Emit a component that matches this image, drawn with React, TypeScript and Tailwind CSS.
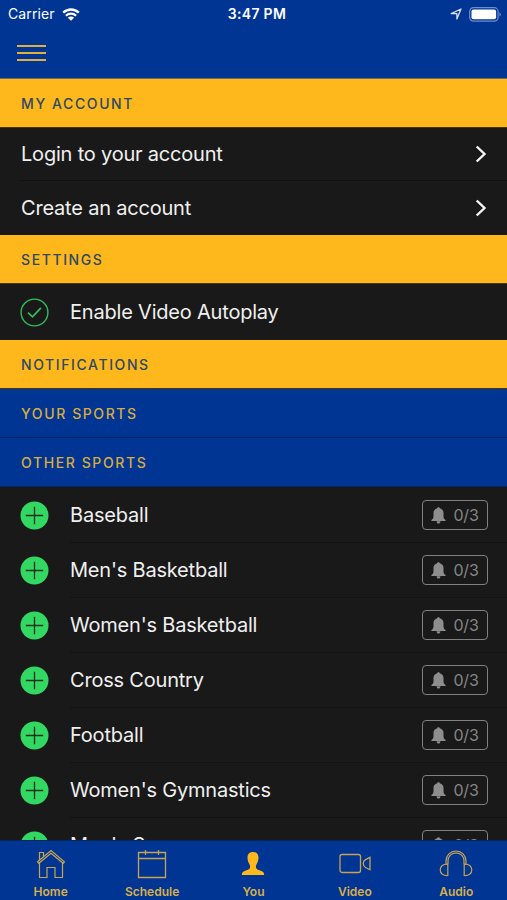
import React from 'react';

const sports = [
  'Baseball',
  "Men's Basketball",
  "Women's Basketball",
  'Cross Country',
  'Football',
  "Women's Gymnastics",
  "Men's Soccer",
];

const WifiIcon = () => (
  <svg width="18" height="13" viewBox="0 0 18 13" className="text-white">
    <path d="M1.2 4.7a11.2 11.2 0 0 1 15.6 0" fill="none" stroke="currentColor" strokeWidth="2.4" />
    <path d="M3.9 7.7a7.3 7.3 0 0 1 10.2 0" fill="none" stroke="currentColor" strokeWidth="2.2" />
    <path d="M9 12.7 5.9 9.7a4.4 4.4 0 0 1 6.2 0z" fill="currentColor" />
  </svg>
);

const LocationIcon = () => (
  <svg width="12" height="12" viewBox="0 0 12 12" fill="none" stroke="#d5def2" strokeWidth="1.3" strokeLinejoin="round">
    <path d="M11 1 6.9 11V5.6H1.2z" />
  </svg>
);

const BatteryIcon = () => (
  <svg width="33" height="15" viewBox="0 0 33 15">
    <rect x="0.7" y="0.7" width="28.4" height="13.4" rx="3.8" fill="none" stroke="#6f8cc8" strokeWidth="1.2" />
    <rect x="2.5" y="2.6" width="24.6" height="9.6" rx="1.9" fill="#fff" />
    <path d="M30.5 5.2c1.6.8 1.6 3.6 0 4.4z" fill="#7f99ce" />
  </svg>
);

const ChevronIcon = () => (
  <svg width="12" height="18" viewBox="0 0 12 18" fill="none" stroke="#f4f4f4" strokeWidth="2.4">
    <path d="m1.7 1.5 7.8 7.5-7.8 7.5" />
  </svg>
);

const CheckIcon = () => (
  <svg width="29" height="29" viewBox="0 0 29 29" fill="none" stroke="#2fbf5a" strokeWidth="1.4">
    <circle cx="14.5" cy="14.5" r="13.4" />
    <path d="m8 14.6 4.5 4.3 8.4-9" strokeWidth="1.7" />
  </svg>
);

const PlusIcon = () => (
  <svg width="29" height="29" viewBox="0 0 29 29">
    <circle cx="14.5" cy="14.5" r="14" fill="#33d863" />
    <path d="M14.5 5.8v17.4M5.8 14.5h17.4" stroke="#17301d" strokeWidth="1.3" />
  </svg>
);

const BellIcon = () => (
  <svg width="15" height="17" viewBox="0 0 15 17" fill="#8e8e8e">
    <path d="M7.5.2c-.8 0-1.3.5-1.3 1.1C3.8 1.9 2.5 3.6 2.5 5.8v3.7c0 1.7-.6 2.5-2.1 3.5v.9h14.2V13c-1.5-1-2.1-1.8-2.1-3.5V5.8c0-2.2-1.3-3.9-3.7-4.5C8.8.7 8.3.2 7.5.2z" />
    <path d="M5.6 14.2h3.8c0 1.5-.8 2.3-1.9 2.3s-1.9-.8-1.9-2.3z" />
  </svg>
);

const HomeIcon = () => (
  <svg width="30" height="30" viewBox="0 0 30 30" fill="none" stroke="#c5a552" strokeWidth="1.2">
    <path d="M1.6 12.8 15 1.5l13.4 11.3-1.2 1.5L15 4.2 2.8 14.3z" />
    <path d="M3.5 14v14.5H11v-10h8v10h7.5V14M3.5 11V3.5h4v4" />
  </svg>
);

const CalendarIcon = () => (
  <svg width="30" height="30" viewBox="0 0 30 30" fill="none" stroke="#c5a552" strokeWidth="1.3">
    <path d="M1.5 3.5h27v25h-27zM1.5 9.5h27M8.5 1v5M21.5 1v5" />
  </svg>
);

const PersonIcon = () => (
  <svg width="30" height="30" viewBox="0 0 30 30" fill="#ffb81c">
    <path d="M15 3c-3.6 0-5.6 2.300-5.500 5.800.1 2.700.8 4.700 1.800 6.200.8 1.300.9 2.900.6 3.900-.4 1.300-2.100 1.900-4.100 2.600-2.500.9-4 1.900-4 4.500h22.400c0-2.600-1.500-3.600-4-4.500-2-.7-3.700-1.300-4.100-2.600-.3-1-.2-2.600.6-3.900 1-1.500 1.700-3.500 1.800-6.200C20.600 5.300 18.600 3 15 3z" />
  </svg>
);

const VideoIcon = () => (
  <svg width="34" height="30" viewBox="0 0 34 30" fill="none" stroke="#c5a552" strokeWidth="1.3">
    <rect x="2" y="5.5" width="20.5" height="18" rx="2" />
    <path d="M32 8.3v12.5l-4.5-2.3c-3-1.5-3-6.3 0-7.900z" />
  </svg>
);

const HeadphonesIcon = () => (
  <svg width="34" height="30" viewBox="0 0 34 30" fill="none" stroke="#c5a552" strokeWidth="1.2">
    <path d="M9 15.2v-3.400a8 8 0 0 1 16 0v3.400M7 15.500v-3.700a10 9.800 0 0 1 20 0v3.700" />
    <path d="M8.8 15.200v11.300c-4.500.3-7.600-2-7.600-5.600s3.100-6 7.600-5.700zM25.200 15.200v11.300c4.500.3 7.600-2 7.600-5.600s-3.100-6-7.600-5.700z" />
  </svg>
);

const tabs = [
  { label: 'Home', icon: HomeIcon },
  { label: 'Schedule', icon: CalendarIcon },
  { label: 'You', icon: PersonIcon },
  { label: 'Video', icon: VideoIcon },
  { label: 'Audio', icon: HeadphonesIcon },
];

const SectionHeader: React.FC<{ title: string; blue?: boolean }> = ({ title, blue }) => (
  <h2
    className={`h-[49px] shrink-0 flex items-center border-b px-[21px] pt-0.5 text-sm font-medium tracking-[1.6px] ${
      blue
        ? 'bg-[#003594] border-[#042763] text-[#d9ac3c]'
        : 'bg-[#ffb81c] border-[#47370f] text-[#2d4864]'
    }`}
  >
    {title}
  </h2>
);

const AccountRow: React.FC<{ label: string; divider?: boolean }> = ({ label, divider }) => (
  <div className="pl-[21px] shrink-0">
    <div
      className={`flex items-center justify-between h-[54px] pr-5 border-b ${
        divider ? 'border-[#111111]' : 'border-[#191919]'
      }`}
    >
      <span className="text-xl tracking-[-0.2px]">{label}</span>
      <ChevronIcon />
    </div>
  </div>
);

const SportRow: React.FC<{ name: string }> = ({ name }) => (
  <div className="h-[55px] shrink-0 flex items-center pl-5">
    <PlusIcon />
    <div className="ml-[21px] h-full flex-1 flex items-center justify-between border-b border-[#121212] pr-[19px]">
      <span className="text-xl tracking-[-0.2px]">{name}</span>
      <div className="w-[66px] h-[30px] flex items-center justify-center gap-[7px] rounded border-[1.5px] border-[#808080] text-[#858585]">
        <BellIcon />
        <span className="text-base tracking-[-0.2px]">0/3</span>
      </div>
    </div>
  </div>
);

export default function App() {
  return (
    <div className="w-[507px] h-[900px] flex flex-col overflow-hidden bg-[#191919] text-[#f0f0f0] font-['Inter',sans-serif]">
      <header className="h-[78px] shrink-0 bg-[#003594]">
        <div className="h-7 grid grid-cols-3 items-center pl-2 pr-[5px] text-white">
          <div className="flex items-center gap-[7px]">
            <span className="text-sm tracking-[0.1px]">Carrier</span>
            <WifiIcon />
          </div>
          <span className="pl-1 text-center text-sm font-semibold tracking-[0.3px]">3:47 PM</span>
          <div className="flex items-center justify-end gap-[7px]">
            <LocationIcon />
            <BatteryIcon />
          </div>
        </div>
        <button className="ml-[17px] mt-[17px] w-[29px] flex flex-col gap-[5px]" aria-label="Menu">
          <span className="h-0.5 w-full bg-[#dfb03c]" />
          <span className="h-0.5 w-full bg-[#dfb03c]" />
          <span className="h-0.5 w-full bg-[#dfb03c]" />
        </button>
      </header>

      <main className="flex-1 min-h-0 flex flex-col overflow-hidden border-t border-[#6f6a63]">
        <SectionHeader title="MY ACCOUNT" />
        <div className="shrink-0 -mt-px">
          <AccountRow label="Login to your account" divider />
          <AccountRow label="Create an account" />
        </div>

        <SectionHeader title="SETTINGS" />
        <div className="h-14 shrink-0 flex items-center gap-[21px] pl-5">
          <CheckIcon />
          <span className="text-xl tracking-[-0.2px]">Enable Video Autoplay</span>
        </div>

        <SectionHeader title="NOTIFICATIONS" />
        <SectionHeader title="YOUR SPORTS" blue />
        <SectionHeader title="OTHER SPORTS" blue />
        <div className="shrink-0 flex flex-col pt-px">
          {sports.map((name) => (
            <SportRow key={name} name={name} />
          ))}
        </div>
      </main>

      <nav className="h-[60px] shrink-0 grid grid-cols-5 bg-[#003594] border-t border-[#06265c]">
        {tabs.map(({ label, icon: Icon }) => (
          <div key={label} className="flex flex-col items-center pt-2">
            <Icon />
            <span className="mt-[5px] text-xs leading-4 font-semibold text-[#d9b04a]">{label}</span>
          </div>
        ))}
      </nav>
    </div>
  );
}
